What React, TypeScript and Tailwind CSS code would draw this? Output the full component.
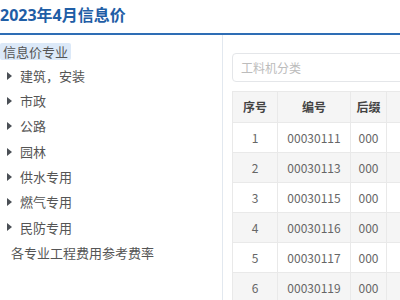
import { Fragment } from "react";

const groups = ["建筑，安装", "市政", "公路", "园林", "供水专用", "燃气专用", "民防专用"];

const rows = [
  { no: 1, code: "00030111", suffix: "000" },
  { no: 2, code: "00030113", suffix: "000" },
  { no: 3, code: "00030115", suffix: "000" },
  { no: 4, code: "00030116", suffix: "000" },
  { no: 5, code: "00030117", suffix: "000" },
  { no: 6, code: "00030119", suffix: "000" },
];

const cjk = "font-['Noto_Sans_CJK_SC',sans-serif]";

function Caret() {
  return (
    <svg width="5" height="8" viewBox="0 0 5 8" className="shrink-0">
      <path d="M0 0 L5 4 L0 8 Z" fill="#4a4f55" />
    </svg>
  );
}

export default function App() {
  return (
    <div className="w-[400px] h-[300px] overflow-hidden bg-white font-['Open_Sans','Noto_Sans_CJK_SC',sans-serif]">
      {/* Title */}
      <div className="h-[35px] border-b-2 border-[#2e6db5] pt-[3px]">
        <h1 className="text-[16px] leading-6 font-bold text-[#1f5ea6]">2023年4月信息价</h1>
      </div>

      <div className="flex h-[265px]">
        {/* Sidebar tree */}
        <div className={`w-[223px] shrink-0 border-r border-[#e2e8ef] pt-[8px] text-[13px] text-[#555] ${cjk}`}>
          <div className="h-[17px] flex items-center">
            <span className="bg-[#dce9f8] rounded-[2px] pl-[3px] pr-[3px] leading-[17px]">信息价专业</span>
          </div>
          <div className="mt-[3px]">
            {groups.map((g) => (
              <div key={g} className="h-[25.3px] flex items-center gap-[8px] pl-[7px]">
                <Caret />
                <span>{g}</span>
              </div>
            ))}
            <div className="h-[25.3px] flex items-center pl-[11px]">各专业工程费用参考费率</div>
          </div>
        </div>

        {/* Main */}
        <div className="flex-1 pl-[9px] pt-[18px] min-w-0">
          <div className="h-[29px] w-[200px] border border-[#e4e6e9] rounded-[4px] flex items-center pl-[8px]">
            <span className={`text-[12px] text-[#bcbcbc] ${cjk}`}>工料机分类</span>
          </div>

          <div className={`mt-[9px] w-[240px] border-l border-t border-[#e9e9e9] text-[12px] ${cjk}`}>
            <div className="grid grid-cols-[45px_73px_36px_1fr]">
              {["序号", "编号", "后缀", ""].map((h, i) => (
                <div
                  key={i}
                  className="h-[31px] bg-[#f5f5f5] border-r border-b border-[#e9e9e9] flex items-center justify-center font-bold text-[#444]"
                >
                  {h}
                </div>
              ))}
              {rows.map((r, idx) => {
                const bg = idx % 2 === 1 ? "bg-[#f5f5f5]" : "bg-white";
                return (
                  <Fragment key={r.no}>
                    <div className={`h-[30px] ${bg} border-r border-b border-[#e9e9e9] flex items-center justify-center text-[#666]`}>{r.no}</div>
                    <div className={`h-[30px] ${bg} border-r border-b border-[#e9e9e9] flex items-center justify-center text-[#666]`}>{r.code}</div>
                    <div className={`h-[30px] ${bg} border-r border-b border-[#e9e9e9] flex items-center justify-center text-[#666]`}>{r.suffix}</div>
                    <div className={`h-[30px] ${bg} border-r border-b border-[#e9e9e9]`} />
                  </Fragment>
                );
              })}
            </div>
          </div>
        </div>
      </div>
    </div>
  );
}
